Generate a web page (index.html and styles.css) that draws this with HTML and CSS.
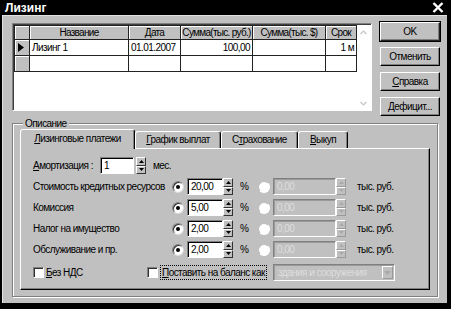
FILE: index.html
```html
<!DOCTYPE html>
<html lang="ru">
<head>
    <meta charset="UTF-8">
    <title>Лизинг</title>
    <link rel="stylesheet" href="styles.css">
</head>
<body>
<div class="window">
    <div class="titlebar">
        <span class="title">Лизинг</span>
        <svg class="close" width="12" height="11" viewBox="0 0 12 11"><path d="M1.5 1 L10.5 10 M10.5 1 L1.5 10" stroke="#fff" stroke-width="2.4"/></svg>
    </div>

    <div class="client">
        <div class="top">
            <div class="gridbox">
                <table class="grid">
                    <colgroup>
                        <col style="width:15px"><col style="width:99px"><col style="width:52px">
                        <col style="width:72px"><col style="width:73px"><col style="width:31px">
                    </colgroup>
                    <thead>
                        <tr><th></th><th>Название</th><th>Дата</th><th>Сумма(тыс. руб.)</th><th>Сумма(тыс. $)</th><th>Срок</th></tr>
                    </thead>
                    <tbody>
                        <tr>
                            <td class="ind"><svg width="6" height="9" viewBox="0 0 6 9"><polygon points="0,0 6,4.5 0,9" fill="#000"/></svg></td>
                            <td>Лизинг 1</td><td>01.01.2007</td><td class="num">100,00</td><td></td><td class="num">1 м</td>
                        </tr>
                        <tr><td class="ind"></td><td></td><td></td><td></td><td></td><td></td></tr>
                    </tbody>
                </table>
                <div class="vscroll">
                    <svg width="9" height="9" viewBox="0 0 9 9"><path d="M1.5 6 L4.5 3 L7.5 6" stroke="#c4c4c4" fill="none" stroke-width="1.2"/></svg>
                    <svg width="9" height="9" viewBox="0 0 9 9"><path d="M1.5 3 L4.5 6 L7.5 3" stroke="#c4c4c4" fill="none" stroke-width="1.2"/></svg>
                </div>
            </div>

            <div class="buttons">
                <button class="btn default">OK</button>
                <button class="btn">Отменить</button>
                <button class="btn"><u>С</u>правка</button>
                <button class="btn"><u>Д</u>ефицит...</button>
            </div>
        </div>

        <div class="group">
            <div class="group-title">Описание</div>
            <div class="tabs">
                <div class="tab active" style="width:115px"><u>Л</u>изинговые платежи</div>
                <div class="tab" style="width:86px"><u>Г</u>рафик выплат</div>
                <div class="tab" style="width:77px">С<u>т</u>рахование</div>
                <div class="tab" style="width:50px"><u>В</u>ыкуп</div>
            </div>

            <div class="panel">
                <div class="amort">
                    <span class="amort-label"><u>А</u>мортизация :</span>
                    <div class="edit amort-edit">1</div>
                    <div class="spin">
                        <span class="spin-btn"><svg width="5" height="3" viewBox="0 0 5 3"><polygon points="0,3 2.5,0 5,3"/></svg></span>
                        <span class="spin-btn"><svg width="5" height="3" viewBox="0 0 5 3"><polygon points="0,0 5,0 2.5,3"/></svg></span>
                    </div>
                    <span class="unit">мес.</span>
                </div>

                <div class="rates">
                    <span>Стоимость кредитных ресурсов</span>
                    <span class="radio on"></span>
                    <div class="edit">20,00</div>
                    <div class="spin">
                        <span class="spin-btn"><svg width="5" height="3" viewBox="0 0 5 3"><polygon points="0,3 2.5,0 5,3"/></svg></span>
                        <span class="spin-btn"><svg width="5" height="3" viewBox="0 0 5 3"><polygon points="0,0 5,0 2.5,3"/></svg></span>
                    </div>
                    <span class="pct">%</span>
                    <span class="radio"></span>
                    <div class="edit off">0,00</div>
                    <div class="spin off">
                        <span class="spin-btn"><svg width="5" height="3" viewBox="0 0 5 3"><polygon points="0,3 2.5,0 5,3"/></svg></span>
                        <span class="spin-btn"><svg width="5" height="3" viewBox="0 0 5 3"><polygon points="0,0 5,0 2.5,3"/></svg></span>
                    </div>
                    <span class="rub">тыс. руб.</span>

                    <span>Комиссия</span>
                    <span class="radio on"></span>
                    <div class="edit">5,00</div>
                    <div class="spin">
                        <span class="spin-btn"><svg width="5" height="3" viewBox="0 0 5 3"><polygon points="0,3 2.5,0 5,3"/></svg></span>
                        <span class="spin-btn"><svg width="5" height="3" viewBox="0 0 5 3"><polygon points="0,0 5,0 2.5,3"/></svg></span>
                    </div>
                    <span class="pct">%</span>
                    <span class="radio"></span>
                    <div class="edit off">0,00</div>
                    <div class="spin off">
                        <span class="spin-btn"><svg width="5" height="3" viewBox="0 0 5 3"><polygon points="0,3 2.5,0 5,3"/></svg></span>
                        <span class="spin-btn"><svg width="5" height="3" viewBox="0 0 5 3"><polygon points="0,0 5,0 2.5,3"/></svg></span>
                    </div>
                    <span class="rub">тыс. руб.</span>

                    <span>Налог на имущество</span>
                    <span class="radio on"></span>
                    <div class="edit">2,00</div>
                    <div class="spin">
                        <span class="spin-btn"><svg width="5" height="3" viewBox="0 0 5 3"><polygon points="0,3 2.5,0 5,3"/></svg></span>
                        <span class="spin-btn"><svg width="5" height="3" viewBox="0 0 5 3"><polygon points="0,0 5,0 2.5,3"/></svg></span>
                    </div>
                    <span class="pct">%</span>
                    <span class="radio"></span>
                    <div class="edit off">0,00</div>
                    <div class="spin off">
                        <span class="spin-btn"><svg width="5" height="3" viewBox="0 0 5 3"><polygon points="0,3 2.5,0 5,3"/></svg></span>
                        <span class="spin-btn"><svg width="5" height="3" viewBox="0 0 5 3"><polygon points="0,0 5,0 2.5,3"/></svg></span>
                    </div>
                    <span class="rub">тыс. руб.</span>

                    <span>Обслуживание и пр.</span>
                    <span class="radio on"></span>
                    <div class="edit">2,00</div>
                    <div class="spin">
                        <span class="spin-btn"><svg width="5" height="3" viewBox="0 0 5 3"><polygon points="0,3 2.5,0 5,3"/></svg></span>
                        <span class="spin-btn"><svg width="5" height="3" viewBox="0 0 5 3"><polygon points="0,0 5,0 2.5,3"/></svg></span>
                    </div>
                    <span class="pct">%</span>
                    <span class="radio"></span>
                    <div class="edit off">0,00</div>
                    <div class="spin off">
                        <span class="spin-btn"><svg width="5" height="3" viewBox="0 0 5 3"><polygon points="0,3 2.5,0 5,3"/></svg></span>
                        <span class="spin-btn"><svg width="5" height="3" viewBox="0 0 5 3"><polygon points="0,0 5,0 2.5,3"/></svg></span>
                    </div>
                    <span class="rub">тыс. руб.</span>
                </div>

                <div class="checks">
                    <div class="check check-nds"><span class="box"></span><span><u>Б</u>ез НДС</span></div>
                    <div class="check check-balance"><span class="box"></span><span class="focus"><u>П</u>оставить на баланс как</span></div>
                    <div class="combo">
                        <span class="combo-text">здания и сооружения</span>
                        <span class="combo-btn"><svg width="7" height="4" viewBox="0 0 7 4"><polygon points="0,0 7,0 3.5,4"/></svg></span>
                    </div>
                </div>
            </div>
        </div>
    </div>
</div>
</body>
</html>
```

FILE: styles.css
```css
:root {
    --face: #c0c0c0;
    --shadow: #808080;
    --dark: #000;
    --light: #fff;
    --disabled: #dedede;
}

* {
    box-sizing: border-box;
    margin: 0;
    padding: 0;
}

body {
    width: 451px;
    height: 309px;
    overflow: hidden;
    background: #000;
    font-family: 'Liberation Sans', Arial, sans-serif;
    font-size: 10px;
    letter-spacing: -0.55px;
    white-space: nowrap;
    color: #000;
}

u {
    text-decoration: underline;
    text-underline-offset: 1px;
}

.window {
    width: 451px;
    height: 309px;
    display: flex;
    flex-direction: column;
    background: #000;
}

/* заголовок окна */
.titlebar {
    height: 16px;
    display: flex;
    align-items: center;
    justify-content: space-between;
    padding: 0 7px 0 5px;
    color: #fff;
}

.title {
    font-weight: bold;
    font-size: 12px;
    letter-spacing: 0;
}

.client {
    flex: 1;
    display: flex;
    flex-direction: column;
    margin: 0 4px 6px 2px;
    padding: 8px 7px 6px 10px;
    background: var(--face);
    box-shadow: inset 1px 1px 0 #e2e2e2;
}

/* таблица + кнопки */
.top {
    display: flex;
    gap: 8px;
    height: 88px;
}

.gridbox {
    width: 360px;
    display: flex;
    padding: 1px 1px 0 1px;
    background: #fff;
    border: 1px solid;
    border-color: var(--shadow) var(--light) var(--light) var(--shadow);
    box-shadow: inset 1px 1px 0 #404040;
}

.grid {
    width: 342px;
    table-layout: fixed;
    border-collapse: collapse;
    align-self: flex-start;
}

.grid th,
.grid td {
    border: 1px solid #222;
    padding: 0 2px;
    overflow: hidden;
    font-weight: normal;
    line-height: 13px;
}

.grid th {
    height: 14px;
    padding: 0 1px;
    background: var(--face);
    text-align: center;
    letter-spacing: -0.7px;
    box-shadow: inset 1px 1px 0 #fff;
}

.grid td {
    height: 16px;
}

.grid td.ind {
    background: var(--face);
    box-shadow: inset 1px 1px 0 #fff;
    padding: 0 0 0 3px;
}

.grid td.ind svg {
    display: block;
}

.grid td.num {
    text-align: right;
}

.vscroll {
    flex: 1;
    display: flex;
    flex-direction: column;
    justify-content: space-between;
    align-items: center;
    padding: 3px 0 2px;
}

.buttons {
    width: 60px;
    display: flex;
    flex-direction: column;
    gap: 6px;
    margin-top: -1px;
    align-self: flex-start;
}

.btn {
    height: 19px;
    font: inherit;
    letter-spacing: inherit;
    background: var(--face);
    border: 1px solid;
    border-color: var(--light) var(--dark) var(--dark) var(--light);
    box-shadow: inset -1px -1px 0 var(--shadow);
}

.btn.default {
    outline: 1px solid #000;
    border-color: var(--light) #222 #222 var(--light);
}

/* группа «Описание» */
.group {
    margin: 12px 2px 0 0;
    padding: 0 7px 6px 7px;
    border: 1px solid var(--shadow);
    box-shadow: 1px 1px 0 var(--light), inset 1px 1px 0 var(--light);
}

.group-title {
    width: fit-content;
    margin: -7px 0 0 3px;
    padding: 0 2px;
    line-height: 13px;
    background: var(--face);
}

.tabs {
    height: 19px;
    margin-top: -1px;
    display: flex;
    align-items: flex-end;
}

.tab {
    position: relative;
    z-index: 1;
    height: 17px;
    line-height: 15px;
    text-align: center;
    background: var(--face);
    border: 1px solid;
    border-bottom: none;
    border-color: var(--light) var(--dark) transparent var(--light);
    border-radius: 3px 3px 0 0;
    box-shadow: inset -1px 0 0 var(--shadow);
}

.tab.active {
    height: 20px;
    margin-bottom: -1px;
    line-height: 18px;
}

.panel {
    padding: 8px 0 8px 12px;
    border: 1px solid;
    border-color: var(--light) var(--dark) var(--dark) var(--light);
    box-shadow: inset -1px -1px 0 var(--shadow);
}

/* поля ввода */
.edit {
    height: 17px;
    padding-left: 3px;
    line-height: 15px;
    background: #fff;
    border: 1px solid;
    border-color: var(--shadow) var(--light) var(--light) var(--shadow);
    box-shadow: inset 1px 1px 0 #000;
}

.edit.off {
    background: var(--face);
    color: var(--disabled);
    box-shadow: inset 1px 1px 0 #9a9a9a;
}

.spin {
    width: 10px;
    height: 17px;
    display: flex;
    flex-direction: column;
}

.spin-btn {
    flex: 1;
    display: flex;
    align-items: center;
    justify-content: center;
    background: var(--face);
    border: 1px solid;
    border-color: var(--light) #333 #333 var(--light);
}

.spin-btn svg {
    fill: #000;
}

.spin.off .spin-btn {
    border-color: var(--light) #9a9a9a #9a9a9a var(--light);
}

.spin.off .spin-btn svg {
    fill: #a8a8a8;
}

.amort {
    display: flex;
    align-items: center;
    height: 17px;
}

.amort-label {
    width: 67px;
}

.amort-edit {
    width: 34px;
    margin-right: 2px;
}

.unit {
    padding-left: 7px;
}

.rates {
    display: grid;
    grid-template-columns: 139px 15px 36px 10px 25px 15px 63px 10px auto;
    grid-auto-rows: 17px;
    row-gap: 4px;
    align-items: center;
    margin-top: 4px;
}

.pct {
    padding-left: 7px;
}

.rub {
    padding-left: 11px;
}

.radio {
    width: 12px;
    height: 12px;
    border-radius: 50%;
    background: #fff;
    border: 1px solid;
    border-color: var(--shadow) #dcdcdc #dcdcdc var(--shadow);
    box-shadow: inset 1px 1px 0 #303030;
    display: flex;
    align-items: center;
    justify-content: center;
}

.radio.on::after {
    content: "";
    width: 4px;
    height: 4px;
    border-radius: 50%;
    background: #000;
}

.radio:not(.on) {
    box-shadow: none;
    border-color: #bbb #fff #fff #bbb;
}

/* нижний ряд */
.checks {
    display: flex;
    align-items: center;
    height: 17px;
    margin-top: 6px;
}

.check {
    display: flex;
    align-items: center;
    gap: 2px;
}

.check-nds {
    width: 114px;
}

.check-balance {
    width: 126px;
}

.box {
    width: 11px;
    height: 11px;
    background: #fff;
    border: 1px solid;
    border-color: var(--shadow) var(--light) var(--light) var(--shadow);
    box-shadow: inset 1px 1px 0 #303030;
}

.focus {
    padding: 0 1px;
    border: 1px dotted #000;
    line-height: 13px;
}

.combo {
    width: 122px;
    height: 17px;
    display: flex;
    align-items: center;
    justify-content: space-between;
    padding: 0 1px 0 4px;
    background: var(--face);
    border: 1px solid;
    border-color: var(--shadow) var(--light) var(--light) var(--shadow);
    box-shadow: inset 1px 1px 0 #9a9a9a;
}

.combo-text {
    color: var(--disabled);
    overflow: hidden;
}

.combo-btn {
    flex: none;
    width: 11px;
    height: 13px;
    display: flex;
    align-items: center;
    justify-content: center;
    border: 1px solid;
    border-color: var(--light) #9a9a9a #9a9a9a var(--light);
}

.combo-btn svg {
    fill: #a8a8a8;
}
```
